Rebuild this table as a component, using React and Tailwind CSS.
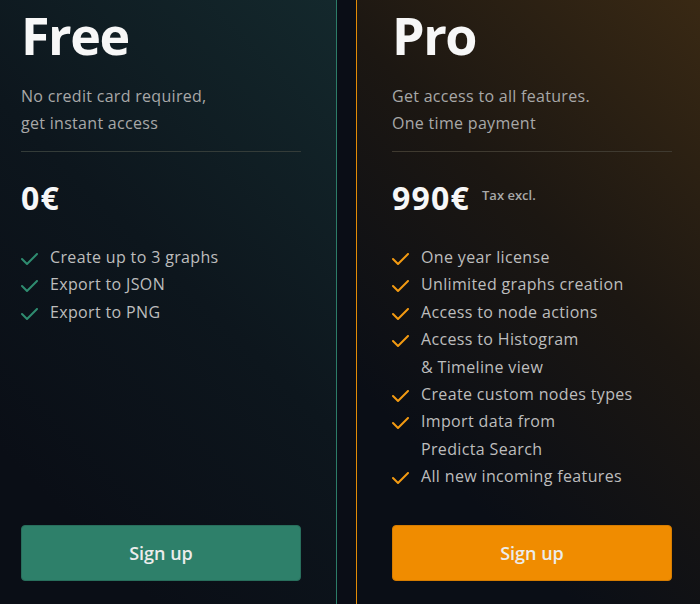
import React from "react";

const plans = [
  {
    name: "Free",
    subtitle: ["No credit card required,", "get instant access"],
    price: "0€",
    tax: null,
    features: [["Create up to 3 graphs"], ["Export to JSON"], ["Export to PNG"]],
    card: "border-[#2c7c68] bg-[linear-gradient(225deg,#14292d_0%,#0d161d_45%,#0a0e16_80%)]",
    divider: "border-[#343c39]",
    check: "#2f8c70",
    button: "bg-[#2e806a] border-[#286e5c]",
  },
  {
    name: "Pro",
    subtitle: ["Get access to all features.", "One time payment"],
    price: "990€",
    tax: "Tax excl.",
    features: [
      ["One year license"],
      ["Unlimited graphs creation"],
      ["Access to node actions"],
      ["Access to Histogram", "& Timeline view"],
      ["Create custom nodes types"],
      ["Import data from", "Predicta Search"],
      ["All new incoming features"],
    ],
    card: "border-[#e38b06] bg-[linear-gradient(225deg,#3b2a14_0%,#1c1712_40%,#0a0e16_75%)]",
    divider: "border-[#3f3a30]",
    check: "#f39a12",
    button: "bg-[#f08c00] border-[#d67c00]",
  },
];

function Check({ color }) {
  return (
    <svg width="17" height="13" viewBox="0 0 17 13" fill="none" className="mt-[9px] shrink-0">
      <polyline points="1,6 6,11 16,1" stroke={color} strokeWidth="2" strokeLinecap="round" strokeLinejoin="round" />
    </svg>
  );
}

function PlanCard({ plan }) {
  return (
    <div className={`flex flex-col w-[352px] h-[660px] shrink-0 border px-[35px] pt-[28px] pb-[58px] ${plan.card}`}>
      {/* Title */}
      <h2 className="text-[52px] font-bold leading-none tracking-[-1.5px] text-[#f7f7f7]">{plan.name}</h2>
      <p className="mt-[22px] text-base leading-[26.5px] tracking-[0.3px] text-[#a8a8a8]">
        {plan.subtitle[0]}
        <br />
        {plan.subtitle[1]}
      </p>

      <div className={`mt-[15px] border-t ${plan.divider}`} />

      {/* Price */}
      <div className="mt-[30px] flex items-start gap-[12px]">
        <span className="text-[32px] font-bold leading-none tracking-[1.2px] text-[#f7f7f7]">{plan.price}</span>
        {plan.tax && <span className="mt-[4px] text-[13px] font-semibold text-[#a8a8a8]">{plan.tax}</span>}
      </div>

      {/* Features */}
      <ul className="mt-[30px] text-base leading-[27.4px] tracking-[0.35px] text-[#bdbdbd]">
        {plan.features.map((lines) => (
          <li key={lines[0]} className="flex items-start gap-[12px]">
            <Check color={plan.check} />
            <span>
              {lines.map((l, i) => (
                <React.Fragment key={l}>
                  {i > 0 && <br />}
                  {l}
                </React.Fragment>
              ))}
            </span>
          </li>
        ))}
      </ul>

      <button className={`mt-auto h-[56px] rounded-[4px] border text-lg font-semibold text-[#ececec] ${plan.button}`}>
        Sign up
      </button>
    </div>
  );
}

export default function App() {
  return (
    <div className="h-[604px] w-[700px] overflow-hidden bg-[#0a0d16] font-['Open_Sans',sans-serif]">
      <div className="flex gap-[19px] -ml-[15px] -mt-[20px]">
        {plans.map((p) => (
          <PlanCard key={p.name} plan={p} />
        ))}
      </div>
    </div>
  );
}
